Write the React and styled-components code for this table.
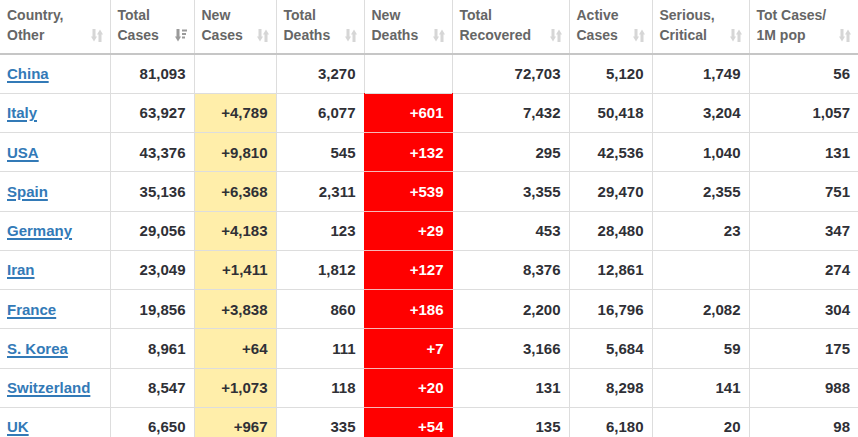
import React from 'react';
import styled, { createGlobalStyle } from 'styled-components';

const GlobalStyle = createGlobalStyle`
  html, body {
    margin: 0;
    padding: 0;
    background: #fff;
    overflow: hidden;
  }
  body {
    font-family: "Liberation Sans", Arial, Helvetica, sans-serif;
  }
`;

const Wrapper = styled.div`
  width: 858px;
  height: 437px;
  overflow: hidden;
`;

const Table = styled.table`
  width: 858px;
  table-layout: fixed;
  border-collapse: collapse;
  border-spacing: 0;
`;

const Col = styled.col`
  width: ${(p) => p.w}px;
`;

const HeadCell = styled.th`
  padding: 5px 7px 8px 7px;
  border-left: 1px solid #ddd;
  border-bottom: 2px solid #c6c6c6;
  vertical-align: bottom;
  text-align: left;
  &:first-child {
    border-left: none;
  }
`;

const HeadInner = styled.div`
  display: flex;
  justify-content: space-between;
  align-items: flex-end;
`;

const HeadLabel = styled.span`
  color: #666;
  font-size: 14px;
  font-weight: bold;
  line-height: 20px;
  white-space: pre-line;
`;

const SortIcon = styled.svg`
  flex: none;
  width: 12px;
  height: 13px;
  margin-bottom: 3px;
  color: ${(p) => (p.active ? '#9a9a9a' : '#d6d6d6')};
`;

const Row = styled.tr`
  height: 39.25px;
`;

const Cell = styled.td`
  padding: 0 8px;
  border: 1px solid #ddd;
  border-top: none;
  font-size: 15px;
  font-weight: bold;
  color: #2f3036;
  text-align: right;
  vertical-align: middle;
  white-space: nowrap;
  background: ${(p) => (p.tone === 'new' ? '#ffeeaa' : p.tone === 'death' ? '#ff0000' : '#fff')};
  ${(p) =>
    p.tone === 'death' &&
    `
    color: #fff;
    border-left: 1px double #ff0000;
    border-right: 1px double #ff0000;
    border-bottom: 1px double #f7b8b8;
  `}
  &:first-child {
    border-left: none;
    text-align: left;
    padding-left: 7px;
  }
  &:last-child {
    border-right: none;
  }
`;

const CountryLink = styled.a`
  color: #337ab7;
  text-decoration: underline;
  text-underline-offset: 2px;
  text-decoration-thickness: 2px;
  cursor: pointer;
`;

const headers = [
  ['Country,\nOther', 110],
  ['Total\nCases', 84, true],
  ['New\nCases', 82],
  ['Total\nDeaths', 88],
  ['New\nDeaths', 88],
  ['Total\nRecovered', 117],
  ['Active\nCases', 83],
  ['Serious,\nCritical', 97],
  ['Tot Cases/\n1M pop', 109],
];

const rows = [
  ['China', '81,093', '', '3,270', '', '72,703', '5,120', '1,749', '56'],
  ['Italy', '63,927', '+4,789', '6,077', '+601', '7,432', '50,418', '3,204', '1,057'],
  ['USA', '43,376', '+9,810', '545', '+132', '295', '42,536', '1,040', '131'],
  ['Spain', '35,136', '+6,368', '2,311', '+539', '3,355', '29,470', '2,355', '751'],
  ['Germany', '29,056', '+4,183', '123', '+29', '453', '28,480', '23', '347'],
  ['Iran', '23,049', '+1,411', '1,812', '+127', '8,376', '12,861', '', '274'],
  ['France', '19,856', '+3,838', '860', '+186', '2,200', '16,796', '2,082', '304'],
  ['S. Korea', '8,961', '+64', '111', '+7', '3,166', '5,684', '59', '175'],
  ['Switzerland', '8,547', '+1,073', '118', '+20', '131', '8,298', '141', '988'],
  ['UK', '6,650', '+967', '335', '+54', '135', '6,180', '20', '98'],
];

const Sort = ({ active }) => (
  <SortIcon active={active} viewBox="0 0 12 13">
    <g fill="currentColor">
      <rect x="1.5" y="0" width="3" height="8" />
      <polygon points="0,7.5 6,7.5 3,12.5" />
      {active ? (
        <>
          <rect x="7" y="0.5" width="5" height="2" />
          <rect x="7" y="4" width="4" height="2" />
          <rect x="7" y="7.5" width="3" height="2" />
        </>
      ) : (
        <>
          <rect x="7.5" y="5" width="3" height="8" />
          <polygon points="6,5.5 12,5.5 9,0.5" />
        </>
      )}
    </g>
  </SortIcon>
);

const toneOf = (i, value) => {
  if (!value) return undefined;
  if (i === 2) return 'new';
  if (i === 4) return 'death';
  return undefined;
};

const App = () => (
  <Wrapper>
    <GlobalStyle />
    <Table>
      <colgroup>
        {headers.map(([label, w]) => (
          <Col key={label} w={w} />
        ))}
      </colgroup>
      <thead>
        <tr>
          {headers.map(([label, , active]) => (
            <HeadCell key={label}>
              <HeadInner>
                <HeadLabel>{label}</HeadLabel>
                <Sort active={active} />
              </HeadInner>
            </HeadCell>
          ))}
        </tr>
      </thead>
      <tbody>
        {rows.map((row) => (
          <Row key={row[0]}>
            {row.map((value, i) =>
              i === 0 ? (
                <Cell key={i}>
                  <CountryLink>{value}</CountryLink>
                </Cell>
              ) : (
                <Cell key={i} tone={toneOf(i, value)}>
                  {value}
                </Cell>
              )
            )}
          </Row>
        ))}
      </tbody>
    </Table>
  </Wrapper>
);

export default App;
